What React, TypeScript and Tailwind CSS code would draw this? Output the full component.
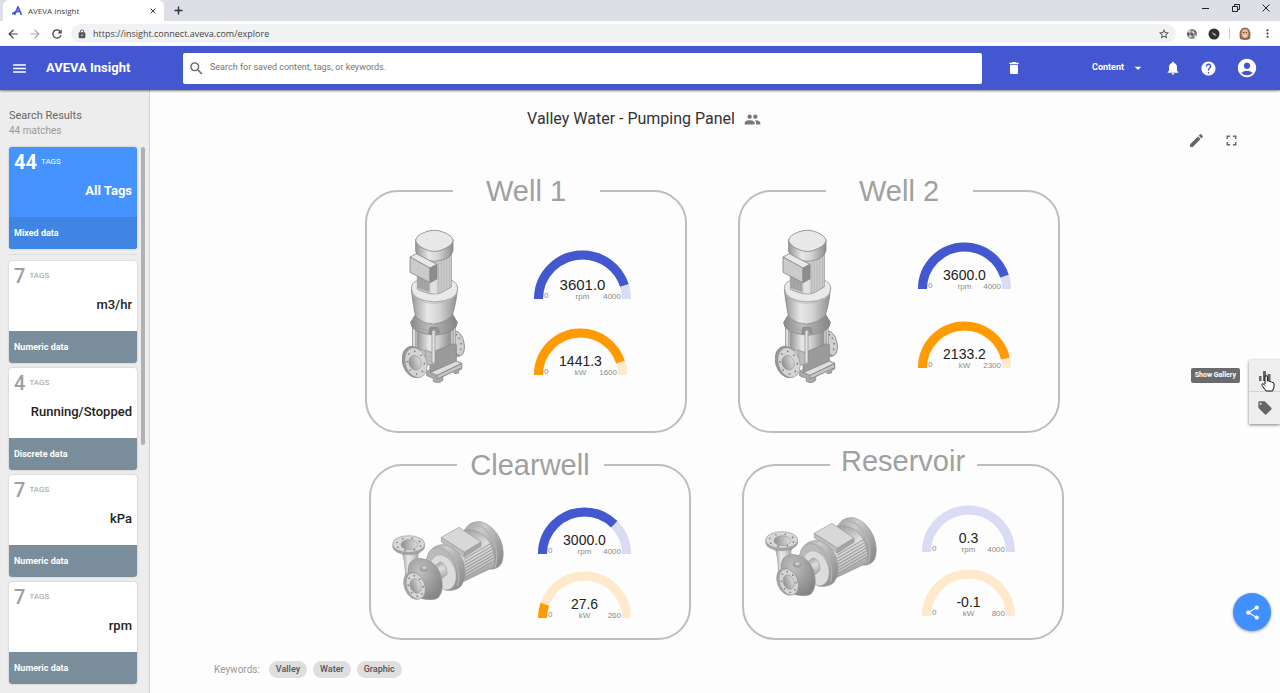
import React from 'react';
import {
  MdAccountCircle,
  MdArrowBack,
  MdArrowDropDown,
  MdArrowForward,
  MdDelete,
  MdEdit,
  MdFullscreen,
  MdHelp,
  MdLocalOffer,
  MdLock,
  MdMenu,
  MdMoreVert,
  MdNotifications,
  MdPeople,
  MdRefresh,
  MdSearch,
  MdShare,
  MdStarBorder,
} from 'react-icons/md';

interface TagGroup {
  count: number;
  name: string;
  type: string;
}

interface Reading {
  value: string;
  max: number;
  unit: 'rpm' | 'kW';
  size?: number;
}

interface Station {
  name: string;
  pump: 'vertical' | 'horizontal';
  readings: Reading[];
  frame: string;
  legend: string;
  columns: string;
  pumpPad: string;
  gaugePad: string;
}

const tagGroups: TagGroup[] = [
  { count: 7, name: 'm3/hr', type: 'Numeric data' },
  { count: 4, name: 'Running/Stopped', type: 'Discrete data' },
  { count: 7, name: 'kPa', type: 'Numeric data' },
  { count: 7, name: 'rpm', type: 'Numeric data' },
];

const wells: Station[] = [
  {
    name: 'Well 1',
    pump: 'vertical',
    readings: [
      { value: '3601.0', max: 4000, unit: 'rpm', size: 97 },
      { value: '1441.3', max: 1600, unit: 'kW' },
    ],
    frame: 'min-h-[260px]',
    legend: '',
    columns: 'grid-cols-[167px_1fr]',
    pumpPad: 'pl-[35px] pt-5',
    gaugePad: 'pt-[41px] gap-[26px]',
  },
  {
    name: 'Well 2',
    pump: 'vertical',
    readings: [
      { value: '3600.0', max: 4000, unit: 'rpm' },
      { value: '2133.2', max: 2300, unit: 'kW' },
    ],
    frame: 'min-h-[260px]',
    legend: '',
    columns: 'grid-cols-[178px_1fr]',
    pumpPad: 'pl-[35px] pt-5',
    gaugePad: 'pt-[33px] gap-[29px]',
  },
];

const tanks: Station[] = [
  {
    name: 'Clearwell',
    pump: 'horizontal',
    readings: [
      { value: '3000.0', max: 4000, unit: 'rpm' },
      { value: '27.6', max: 260, unit: 'kW' },
    ],
    frame: 'min-h-[193px]',
    legend: '',
    columns: 'grid-cols-[167px_1fr]',
    pumpPad: 'pl-[21px] pt-[37px]',
    gaugePad: 'pt-6 gap-[14px]',
  },
  {
    name: 'Reservoir',
    pump: 'horizontal',
    readings: [
      { value: '0.3', max: 4000, unit: 'rpm' },
      { value: '-0.1', max: 800, unit: 'kW' },
    ],
    frame: 'min-h-[197px]',
    legend: 'pb-2',
    columns: 'grid-cols-[178px_1fr]',
    pumpPad: 'pl-[21px] pt-[29px]',
    gaugePad: 'pt-[18px] gap-[14px]',
  },
];

const gaugeColors = {
  rpm: { fill: '#4357d0', track: '#d9dcf3' },
  kW: { fill: '#ff9b00', track: '#ffe9cc' },
};

const Gauge = ({ value, max, unit, size = 93 }: Reading) => {
  const thickness = 9;
  const half = size / 2;
  const radius = (size - thickness) / 2;
  const base = Math.ceil(half);
  const percent = Math.max(0, Math.min(100, (parseFloat(value) / max) * 100));
  const arc = `M${thickness / 2} ${base}A${radius} ${radius} 0 0 1 ${size - thickness / 2} ${base}`;
  const color = gaugeColors[unit];
  return (
    <svg width={size} height={base + 3} role="img" aria-label={`${value} ${unit}`} className="font-['Liberation_Sans',sans-serif]">
      <path d={arc} fill="none" stroke={color.track} strokeWidth={thickness} />
      {percent > 1 && (
        <path d={arc} fill="none" stroke={color.fill} strokeWidth={thickness} pathLength={100} strokeDasharray={`${percent} 100`} />
      )}
      <text x={half} y={base - 9} textAnchor="middle" fontSize={size > 93 ? 15 : 14} fill="#222">{value}</text>
      <text x={half} y={base} textAnchor="middle" fontSize={8} fill="#8a8a8a">{unit}</text>
      <text x={thickness + 1} y={base - 1} fontSize={8} fill="#8a8a8a">0</text>
      <text x={size - thickness - 1} y={base} textAnchor="end" fontSize={8} fill="#8a8a8a">{max}</text>
    </svg>
  );
};

// gradients shared by all pump drawings
const PumpDefs = () => (
  <svg className="absolute h-0 w-0" aria-hidden="true">
    <defs>
      <linearGradient id="steel">
        <stop offset="0" stopColor="#969696" />
        <stop offset="0.35" stopColor="#e8e8e8" />
        <stop offset="0.6" stopColor="#d4d4d4" />
        <stop offset="1" stopColor="#8e8e8e" />
      </linearGradient>
      <linearGradient id="skirt">
        <stop offset="0" stopColor="#888" />
        <stop offset="0.4" stopColor="#bdbdbd" />
        <stop offset="1" stopColor="#828282" />
      </linearGradient>
      <linearGradient id="barrel" x1="0.3" y1="0" x2="0.65" y2="1">
        <stop offset="0" stopColor="#9a9a9a" />
        <stop offset="0.4" stopColor="#dedede" />
        <stop offset="1" stopColor="#999" />
      </linearGradient>
      <linearGradient id="rim" x1="0" y1="0" x2="1" y2="0.8">
        <stop offset="0" stopColor="#9b9b9b" />
        <stop offset="0.35" stopColor="#cbcbcb" />
        <stop offset="1" stopColor="#8b8b8b" />
      </linearGradient>
      <radialGradient id="volute" cx="0.35" cy="0.3" r="0.75">
        <stop offset="0" stopColor="#c0c0c0" />
        <stop offset="1" stopColor="#858585" />
      </radialGradient>
      <linearGradient id="bore">
        <stop offset="0" stopColor="#8e8e8e" />
        <stop offset="1" stopColor="#dedede" />
      </linearGradient>
    </defs>
  </svg>
);

const Bolts = ({ cx, cy, rx, ry, tilt }: { cx: number; cy: number; rx: number; ry: number; tilt: number }) => (
  <g transform={`rotate(${tilt} ${cx} ${cy})`} fill="#777">
    {[0, 1, 2, 3, 4, 5, 6, 7].map((i) => (
      <circle key={i} cx={cx + rx * Math.cos((i * Math.PI) / 4 + 0.3)} cy={cy + ry * Math.sin((i * Math.PI) / 4 + 0.3)} r="2.5" />
    ))}
  </g>
);

const VerticalPump = () => (
  <svg width="64" height="156" viewBox="34 26 192 468" stroke="#888" strokeWidth="2.5" strokeLinejoin="round" aria-hidden="true">
    {/* outlet flange */}
    <ellipse cx="197" cy="371" rx="21" ry="38" transform="rotate(-12 197 371)" fill="#aaa" />
    <ellipse cx="202" cy="369" rx="18" ry="37" transform="rotate(-12 202 369)" fill="#cfcfcf" />
    <g fill="#777" stroke="none">
      <circle cx="197" cy="343" r="2.5" />
      <circle cx="206" cy="354" r="2.5" />
      <circle cx="211" cy="370" r="2.5" />
      <circle cx="210" cy="387" r="2.5" />
    </g>
    {/* base plate */}
    <path d="M108 455L186 420L213 429V446L204 450V458L191 460L188 453L156 469V480Q145 492 128 483V474L108 466Z" fill="#aaa" />
    <path d="M108 452L185 418L213 429L139 465Z" fill="#ddd" />
    <path d="M139 465V476L213 442V430Z" fill="#c5c5c5" />
    {/* chamber */}
    <path d="M66 322H192V384L122 420L66 390Z" fill="#c6c6c6" stroke="#aaa" />
    <path d="M80 328H180V380Q130 410 80 384Z" fill="url(#steel)" strokeWidth="1.500" />
    <path d="M118 402L134 392L192 368L197 374V422L118 457Z" fill="#9a9a9a" />
    <path d="M103 388L134 402V432L108 434Z" fill="#bcbcbc" stroke="#999" />
    <path d="M66 318V384H75V322Z" fill="#e2e2e2" strokeWidth="2" />
    <path d="M188 314V372H194V310Z" fill="#ddd" strokeWidth="2" />
    {/* skirt */}
    <path d="M72 286L60 306Q59 337 132 345Q200 337 200 306L186 282Z" fill="url(#skirt)" />
    <path d="M60 306Q75 330 132 331Q190 327 200 303" fill="none" stroke="#999" strokeWidth="1.500" />
    <path d="M114 339L118 321H141L147 337L140 341L136 326H124L122 341Z" fill="#929292" />
    <path d="M124 330V428H133V330Z" fill="#e3e3e3" strokeWidth="2" />
    {/* coupling */}
    <path d="M62 206Q68 262 76 292Q128 333 184 288Q197 248 201 202Z" fill="url(#steel)" />
    <path d="M62 204Q62 181 96 176H170Q201 182 201 205Q201 241 131 245Q64 241 62 204Z" fill="#eaeaea" stroke="#999" />
    <path d="M65 218Q80 250 132 249Q188 246 199 216" fill="none" stroke="#bbb" />
    {/* motor */}
    <path d="M80 95V207Q125 228 150 218L182 200V92Z" fill="#cdcdcd" stroke="#999" />
    <path d="M80 160L116 182V215L80 202Z" fill="#a2a2a2" stroke="none" />
    <g stroke="#aaa" strokeWidth="2" fill="none">
      <path d="M88 166V207M98 171V210M108 177V213M144 125V219M152 121V217M160 117V213M168 112V209M176 109V205" />
    </g>
    <path d="M120 183V218L138 220V176Z" fill="#e1e1e1" stroke="none" />
    <path d="M75 58V92Q80 121 132 123Q181 119 187 91V58Z" fill="url(#steel)" />
    <path d="M75 60Q77 44 104 35Q132 24 160 36Q185 47 187 60Q186 74 164 84Q132 102 102 86Q77 75 75 60Z" fill="#e8e8e8" />
    {/* terminal box */}
    <path d="M58 110L77 100L139 132L118 144Z" fill="#e8e8e8" />
    <path d="M58 110L118 143V187L58 156Z" fill="#cbcbcb" />
    <path d="M118 143L139 132V176L118 187Z" fill="#8d8d8d" />
    {/* inlet flange */}
    <ellipse cx="70" cy="425" rx="34" ry="48" transform="rotate(-17 70 425)" fill="#989898" />
    <ellipse cx="76" cy="427" rx="32" ry="46" transform="rotate(-17 76 427)" fill="#d4d4d4" strokeWidth="1.500" />
    <ellipse cx="73" cy="427" rx="18" ry="22" transform="rotate(-17 73 427)" fill="url(#bore)" strokeWidth="1.500" />
    <g stroke="none">
      <Bolts cx={75} cy={427} rx={25} ry={35} tilt={-17} />
    </g>
  </svg>
);

const HorizontalPump = () => (
  <svg width="113" height="83" viewBox="20 28 339 249" stroke="#999" strokeWidth="2" strokeLinejoin="round" aria-hidden="true">
    {/* rear cap */}
    <path d="M238 58Q252 31 286 33Q325 43 346 89Q360 127 349 157Q338 178 310 175Z" fill="url(#rim)" />
    <path d="M238 58Q256 37 287 47Q318 66 331 108Q338 144 329 171" fill="none" stroke="#b4b4b4" strokeWidth="4" />
    {/* motor body */}
    <path d="M184 98L239 58Q284 54 311 91Q333 130 326 169L236 212Z" fill="url(#barrel)" />
    <g stroke="#9a9a9a" strokeWidth="3">
      <path d="M237 145L314 100M238 154L318 108M239 163L321 116M240 172L324 124M241 181L326 132M241 190L328 140M240 199L328 149" />
    </g>
    <g stroke="#dcdcdc" strokeWidth="2">
      <path d="M238 150L316 104M239 159L320 112M240 168L322 120M241 177L325 128M241 186L327 136M241 195L328 145" />
    </g>
    {/* terminal box */}
    <path d="M168 80L237 124V139L168 94Z" fill="#bdbdbd" />
    <path d="M237 124L287 94V107L237 139Z" fill="#a5a5a5" />
    <path d="M168 80L221 50L287 94L237 124Z" fill="#d8d8d8" />
    {/* front bell */}
    <path d="M124 146Q130 109 166 102Q207 98 233 151Q247 198 228 225Q214 242 181 239Q132 203 124 146Z" fill="url(#rim)" />
    <path d="M151 110Q187 109 209 151Q226 190 217 226" fill="none" stroke="#b2b2b2" strokeWidth="4" />
    <ellipse cx="168" cy="174" rx="41" ry="65" transform="rotate(-20 168 174)" fill="#bababa" strokeWidth="1" />
    <ellipse cx="173" cy="185" rx="37" ry="54" transform="rotate(-20 173 185)" fill="#dcdcdc" strokeWidth="1" />
    <path d="M137 174L164 154Q184 157 185 190L158 215Z" fill="url(#barrel)" />
    {/* volute */}
    <path d="M48 118H105Q94 133 98 147L91 193L60 209Q62 153 48 118Z" fill="url(#steel)" />
    <path d="M68 184Q66 146 103 143Q148 148 164 187Q180 236 159 261Q145 271 110 264Q72 235 68 184Z" fill="url(#volute)" />
    <ellipse cx="116" cy="174" rx="12" ry="8" fill="#a5a5a5" />
    <ellipse cx="117" cy="171" rx="8" ry="5" fill="#d0d0d0" strokeWidth="1" />
    {/* discharge flange */}
    <ellipse cx="70" cy="107" rx="48" ry="25" fill="#a5a5a5" />
    <ellipse cx="70" cy="100" rx="48" ry="25" fill="#d8d8d8" />
    <ellipse cx="72" cy="102" rx="25" ry="15" fill="url(#bore)" />
    {/* suction flange */}
    <ellipse cx="85" cy="225" rx="28" ry="42" transform="rotate(-20 85 225)" fill="#a5a5a5" />
    <ellipse cx="91" cy="226" rx="27" ry="41" transform="rotate(-20 91 226)" fill="#d6d6d6" />
    <ellipse cx="91" cy="226" rx="16" ry="22" transform="rotate(-20 91 226)" fill="url(#bore)" />
    <g stroke="none">
      <Bolts cx={70} cy={101} rx={37} ry={19} tilt={0} />
      <Bolts cx={91} cy={226} rx={21} ry={32} tilt={-20} />
    </g>
  </svg>
);

const StationPanel = ({ station }: { station: Station }) => (
  <fieldset className={`w-[322px] rounded-[33px] border-2 border-[#bdbdbd] ${station.frame}`}>
    <legend className={`mx-auto w-[147px] text-center font-['Liberation_Sans',sans-serif] text-[29px] leading-9 text-[#a0a0a0] ${station.legend}`}>
      {station.name}
    </legend>
    <div className={`grid ${station.columns}`}>
      <div className={station.pumpPad}>
        {station.pump === 'vertical' ? <VerticalPump /> : <HorizontalPump />}
      </div>
      <div className={`flex flex-col ${station.gaugePad}`}>
        {station.readings.map((r) => (
          <Gauge key={r.unit} {...r} />
        ))}
      </div>
    </div>
  </fieldset>
);

const TagCard = ({ group, selected = false }: { group: TagGroup; selected?: boolean }) => (
  <button
    className={`block w-full shrink-0 overflow-hidden rounded-[3px] text-left shadow-[0_0_2px_rgba(0,0,0,0.25)] ${
      selected ? 'bg-[#4593ff] text-white' : 'bg-white text-[#222]'
    }`}
  >
    <div className="h-[70px] px-[5px] pt-[5px]">
      <div className={`flex h-5 items-center gap-1 ${selected ? '' : 'text-[#9e9e9e]'}`}>
        <span className={`text-[20px] leading-5 ${selected ? 'font-bold' : 'font-medium'}`}>{group.count}</span>
        <span className="text-[8px] leading-5">TAGS</span>
      </div>
      <div className={`mt-[9px] text-right text-[13px] leading-5 ${selected ? 'font-bold' : 'font-medium'}`}>{group.name}</div>
    </div>
    <div className={`h-8 px-[5px] text-[9px] leading-8 font-bold text-white ${selected ? 'bg-[#4084e4]' : 'bg-[#7a8d9b]'}`}>
      {group.type}
    </div>
  </button>
);

const BrowserChrome = () => (
  <div className="bg-white font-['Open_Sans',sans-serif] text-[#444]">
    <div className="flex h-[21px] items-center bg-[#dddee6]">
      <div className="ml-[3px] flex h-full w-[161px] items-center rounded-t-md bg-white pr-[7px] pl-[9px]">
        <svg width="12" height="10" viewBox="0 0 12 10" fill="none" stroke="#4357d0" strokeWidth="2" aria-hidden="true">
          <path d="M2.500 9L6 1L9.500 9M0 8Q5 4 9 6" strokeWidth="1.700" />
        </svg>
        <span className="ml-1 flex-1 text-[8px]">AVEVA Insight</span>
        <button aria-label="Close tab">
          <svg width="8" height="8" viewBox="0 0 8 8" stroke="#444"><path d="M1.500 1.500L6.500 6.500M6.500 1.500L1.500 6.500" /></svg>
        </button>
      </div>
      <button aria-label="New tab" className="ml-[10px]">
        <svg width="9" height="9" viewBox="0 0 9 9" stroke="#333" strokeWidth="1.400"><path d="M4.500 .5V8.500M.5 4.500H8.500" /></svg>
      </button>
      <div className="ml-auto flex items-center gap-[22px] pr-[10px] pb-[5px]">
        <button aria-label="Minimize">
          <svg width="8" height="8" viewBox="0 0 8 8" stroke="#222"><path d="M0 4.500H7" /></svg>
        </button>
        <button aria-label="Restore">
          <svg width="8" height="8" viewBox="0 0 8 8" fill="none" stroke="#222"><path d="M.5 2.500H5.500V7.500H.5ZM2.500 2V.5H7.500V5.500H6" /></svg>
        </button>
        <button aria-label="Close window">
          <svg width="8" height="8" viewBox="0 0 8 8" stroke="#222"><path d="M.5 .5L7.500 7.500M7.500 .5L.5 7.500" /></svg>
        </button>
      </div>
    </div>
    <div className="flex h-[25px] items-center pr-[6px] pl-[6px]">
      <div className="flex w-[65px] items-center gap-2">
        <button aria-label="Back"><MdArrowBack size={14} color="#444" /></button>
        <button aria-label="Forward"><MdArrowForward size={14} color="#aaa" /></button>
        <button aria-label="Reload"><MdRefresh size={14} color="#444" /></button>
      </div>
      <div className="flex h-[19px] flex-1 items-center rounded-full bg-[#f1f2f4] pr-[6px] pl-[6px]">
        <MdLock size={10} color="#555" />
        <input
          aria-label="Address"
          defaultValue="https://insight.connect.aveva.com/explore"
          className="ml-[6px] min-w-0 flex-1 bg-transparent text-[9px] outline-none"
        />
        <button aria-label="Bookmark this page"><MdStarBorder size={12} color="#444" /></button>
      </div>
      <div className="ml-[10px] flex items-center gap-[10px]">
        <button aria-label="Extension">
          <svg width="12" height="12" viewBox="0 0 12 12">
            <circle cx="6" cy="6" r="5" fill="#888" />
            <path d="M2 3L5 2L4 5ZM6 3L9 4L7 6ZM3 7L6 8L4 10ZM8 7L11 8L9 11Z" fill="#e5e5e5" />
            <path d="M5 5L7 6L6 8ZM8 2L10 4L9 5ZM1 5L3 6L2 8Z" fill="#333" />
          </svg>
        </button>
        <button aria-label="Extension">
          <svg width="12" height="12" viewBox="0 0 12 12">
            <circle cx="6" cy="6" r="5.500" fill="#2f3033" />
            <path d="M3.500 4L7.500 6L8.500 8L5.500 7Z" fill="#aaa" />
          </svg>
        </button>
        <span className="-mx-px h-[11px] w-px bg-[#ccc]" />
        <button aria-label="Profile">
          <svg width="12" height="13" viewBox="0 0 12 13">
            <path d="M1 12Q-1 1 6 .5Q13 1 11 12Q6 14 1 12Z" fill="#8a6b52" />
            <ellipse cx="6" cy="6.500" rx="3.500" ry="4.500" fill="#e5b48f" />
            <path d="M4 5.500H5.300M6.800 5.500H8" stroke="#4b3528" />
            <path d="M4 8.500Q6 10.500 8 8.500Z" fill="#fff" />
          </svg>
        </button>
        <button aria-label="Browser menu"><MdMoreVert size={13} color="#444" /></button>
      </div>
    </div>
  </div>
);

const AppHeader = () => (
  <header className="relative z-10 flex h-11 items-center bg-[#4357d0] pr-[22px] text-white shadow-[0_1px_2px_rgba(0,0,0,0.5)]">
    <div className="flex w-[183px] items-center pl-[11px]">
      <button aria-label="Menu"><MdMenu size={17} /></button>
      <h1 className="ml-[18px] text-[13px] leading-5 font-bold">AVEVA Insight</h1>
    </div>
    <label className="flex h-[31px] flex-1 items-center rounded-[2px] bg-white pl-[5px]">
      <MdSearch size={17} color="#666" />
      <input
        type="search"
        aria-label="Search"
        placeholder="Search for saved content, tags, or keywords."
        className="ml-[5px] min-w-0 flex-1 bg-transparent text-[9px] text-[#333] outline-none placeholder:text-[#757575]"
      />
    </label>
    <div className="flex w-[276px] items-center gap-[19px] pl-6">
      <button aria-label="Delete"><MdDelete size={16} /></button>
      <div className="relative ml-auto flex h-4 items-center">
        <select aria-label="Content" className="h-4 w-[54px] appearance-none bg-transparent pb-px text-[9px] leading-[15px] font-bold outline-none">
          <option>Content</option>
        </select>
        <MdArrowDropDown size={16} className="pointer-events-none absolute top-0 right-0" />
      </div>
      <button aria-label="Notifications"><MdNotifications size={16} /></button>
      <button aria-label="Help"><MdHelp size={17} /></button>
      <button aria-label="Account"><MdAccountCircle size={22} /></button>
    </div>
  </header>
);

const Sidebar = () => (
  <aside className="w-[150px] shrink-0 border-r border-[#d2d2d2] bg-[#ededed] pt-[18px] pl-[9px]">
    <h2 className="text-[11px] leading-4 text-[#666]">Search Results</h2>
    <p className="text-[10px] leading-[13px] text-[#999]">44 matches</p>
    <div className="mt-[10px] flex items-start gap-1">
      <div className="flex w-32 flex-col gap-[5px]">
        <TagCard group={{ count: 44, name: 'All Tags', type: 'Mixed data' }} selected />
        <hr className="mb-px border-[#dedede]" />
        {tagGroups.map((g) => (
          <TagCard key={g.name} group={g} />
        ))}
      </div>
      <div className="h-[298px] w-1 rounded-full bg-[#b1b1b1]" />
    </div>
  </aside>
);

const SideDock = () => (
  <div className="absolute top-[270px] right-0 flex items-start gap-[9px]">
    <div role="tooltip" className="mt-2 rounded-[2px] bg-[#6b6b6b] px-1 text-[7px] leading-[15px] font-bold text-white">
      Show Gallery
    </div>
    <div className="w-[31px] bg-[#eee] shadow-[0_1px_3px_rgba(0,0,0,0.5)]">
      <button aria-label="Show Gallery" className="relative flex h-8 w-full items-center justify-center border-b border-[#d5d5d5]">
        <svg width="12" height="12" viewBox="0 0 12 12" fill="#666">
          <path d="M0 6H2.500V11H0ZM4 1H7V11H4ZM8.500 4H11.500V11H8.500Z" />
        </svg>
        <svg width="14" height="17" viewBox="0 0 14 17" className="absolute top-[15px] left-3" fill="#fff" stroke="#111" strokeLinejoin="round">
          <path d="M4 9V2Q4 .7 5.200 .7Q6.400 .7 6.400 2V6Q8 5.200 8.600 6.600Q10.300 6 10.800 7.400Q13 7 13 9V12L11.500 16H5L1 10.500Q.5 9 1.700 8.700Q2.600 8.600 4 10.500" />
        </svg>
      </button>
      <button aria-label="Tags" className="flex h-8 w-full items-center justify-center">
        <MdLocalOffer size={16} color="#666" />
      </button>
    </div>
  </div>
);

export default function App() {
  return (
    <div className="flex min-h-screen flex-col bg-[#fdfdfd] font-['Roboto',sans-serif]">
      <PumpDefs />
      <BrowserChrome />
      <AppHeader />
      <div className="relative flex flex-1">
        <Sidebar />
        <main className="min-w-0 flex-1 pt-[19px]">
          <div className="flex items-center justify-center gap-[9px] pr-[142px]">
            <h2 className="text-[16px] leading-5 text-[#333]">Valley Water - Pumping Panel</h2>
            <MdPeople size={17} color="#777" />
          </div>
          <div className="mt-px flex h-5 items-center justify-end gap-[18px] pr-10">
            <button aria-label="Edit"><MdEdit size={17} color="#666" /></button>
            <button aria-label="Full screen"><MdFullscreen size={17} color="#666" /></button>
          </div>
          <div className="mt-[23px] flex flex-col gap-[10px]">
            <div className="flex items-end justify-center gap-[51px] pr-[5px]">
              {wells.map((s) => <StationPanel key={s.name} station={s} />)}
            </div>
            <div className="flex items-end justify-center gap-[51px] pl-[3px]">
              {tanks.map((s) => <StationPanel key={s.name} station={s} />)}
            </div>
          </div>
          <div className="mt-[21px] flex items-center gap-[6px] pl-16">
            <span className="mr-[3px] text-[10px] leading-4 text-[#999]">Keywords:</span>
            {['Valley', 'Water', 'Graphic'].map((k) => (
              <span key={k} className="rounded-full bg-[#dedede] px-[7px] text-[9px] leading-[17px] font-medium text-[#555]">{k}</span>
            ))}
          </div>
        </main>
        <SideDock />
        <button
          aria-label="Share"
          className="absolute right-[9px] bottom-[62px] flex size-[38px] items-center justify-center rounded-full bg-[#4190ff] text-white shadow-[0_1px_3px_rgba(0,0,0,0.4)]"
        >
          <MdShare size={17} />
        </button>
      </div>
    </div>
  );
}
